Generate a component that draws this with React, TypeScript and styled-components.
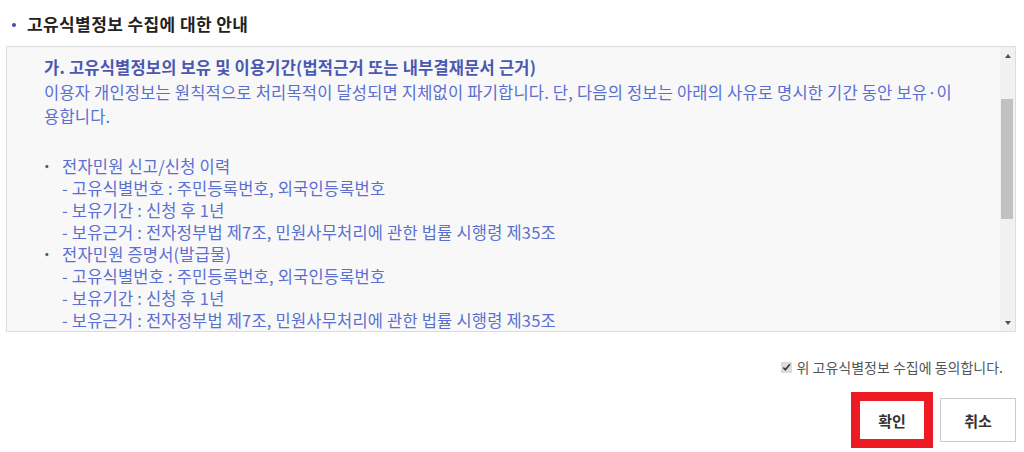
import React from 'react';
import styled, { createGlobalStyle, css } from 'styled-components';

const GlobalStyle = createGlobalStyle`
  html, body {
    margin: 0;
    padding: 0;
    background: #ffffff;
  }

  body {
    font-family: 'Noto Sans CJK KR', 'Noto Sans', sans-serif;
    color: #333333;
  }
`;

const Page = styled.div`
  padding: 10px 8px 0 6px;
`;

const SectionTitle = styled.h3`
  display: flex;
  align-items: center;
  margin: 0;
  padding-left: 6px;
  height: 26px;
  font-size: 17px;
  font-weight: 700;
  letter-spacing: 0.4px;
  color: #222222;

  &::before {
    content: '';
    width: 4px;
    height: 4px;
    margin: 3px 11px 0 0;
    border-radius: 50%;
    background: #3f51b5;
  }
`;

const ScrollBox = styled.div`
  box-sizing: border-box;
  display: flex;
  height: 286px;
  margin-top: 10px;
  border: 1px solid #dddddd;
  background: #f8f8f8;
`;

const Content = styled.div`
  flex: 1;
  overflow: hidden;
  padding: 9px 20px 0 37px;
  font-size: 16.5px;
  line-height: 22px;
  letter-spacing: 0.2px;
  color: #5b6fd0;
`;

const ScrollBar = styled.div`
  display: flex;
  flex-direction: column;
  width: 15px;
  background: #f1f1f1;
`;

const ArrowButton = styled.div<{ $down?: boolean }>`
  display: flex;
  align-items: center;
  justify-content: center;
  height: 17px;

  &::after {
    content: '';
    border-left: 3.5px solid transparent;
    border-right: 3.5px solid transparent;
    ${(p) =>
      p.$down
        ? css`
            border-top: 4px solid #505050;
          `
        : css`
            border-bottom: 4px solid #505050;
          `}
  }
`;

const Track = styled.div`
  flex: 1;
  padding: 0 2px 0 1px;
`;

const Thumb = styled.div<{ $offset: number; $size: number }>`
  margin-top: ${(p) => p.$offset}px;
  height: ${(p) => p.$size}px;
  background: #c1c1c1;
`;

const Heading = styled.p`
  margin: 0;
  font-weight: 700;
  color: #4a58b0;
`;

const Paragraph = styled.p`
  margin: 2px 0 27px;
  white-space: nowrap;
  line-height: 24px;
`;

const ItemList = styled.ul`
  list-style: none;
  margin: 0;
  padding: 0;
`;

const Item = styled.li`
  position: relative;
  padding-left: 18px;

  &::before {
    content: '·';
    position: absolute;
    left: -2px;
    top: 0;
    color: #555555;
    font-weight: 700;
  }
`;

const SubLine = styled.div`
  white-space: nowrap;
`;

const AgreeRow = styled.label`
  display: flex;
  justify-content: flex-end;
  align-items: center;
  gap: 5px;
  height: 20px;
  margin-top: 25px;
  padding-right: 13px;
  font-size: 14px;
  color: #555555;
`;

const CheckBox = styled.input`
  width: 11px;
  height: 11px;
  margin: 0;
  accent-color: #dcdcdc;
`;

const ButtonRow = styled.div`
  display: flex;
  justify-content: flex-end;
  align-items: center;
  gap: 7px;
  margin-top: 15px;
`;

const Button = styled.button<{ $highlighted?: boolean }>`
  box-sizing: border-box;
  width: 76px;
  height: 44px;
  padding: 0;
  border: 1px solid #cccccc;
  background: #ffffff;
  font-family: inherit;
  font-size: 15px;
  font-weight: 700;
  color: #333333;
  cursor: pointer;

  ${(p) =>
    p.$highlighted &&
    css`
      width: 82px;
      height: 56px;
      border: 9px solid #ed1c24;
    `}
`;

interface RetentionItem {
  title: string;
  lines: string[];
}

const items: RetentionItem[] = [
  {
    title: '전자민원 신고/신청 이력',
    lines: [
      '- 고유식별번호 : 주민등록번호, 외국인등록번호',
      '- 보유기간 : 신청 후 1년',
      '- 보유근거 : 전자정부법 제7조, 민원사무처리에 관한 법률 시행령 제35조',
    ],
  },
  {
    title: '전자민원 증명서(발급물)',
    lines: [
      '- 고유식별번호 : 주민등록번호, 외국인등록번호',
      '- 보유기간 : 신청 후 1년',
      '- 보유근거 : 전자정부법 제7조, 민원사무처리에 관한 법률 시행령 제35조',
    ],
  },
];

export default function App() {
  return (
    <Page>
      <GlobalStyle />
      <SectionTitle>고유식별정보 수집에 대한 안내</SectionTitle>
      <ScrollBox>
        <Content>
          <Heading>가. 고유식별정보의 보유 및 이용기간(법적근거 또는 내부결재문서 근거)</Heading>
          <Paragraph>
            이용자 개인정보는 원칙적으로 처리목적이 달성되면 지체없이 파기합니다. 단, 다음의 정보는 아래의 사유로 명시한 기간 동안 보유·이
            <br />
            용합니다.
          </Paragraph>
          <ItemList>
            {items.map((item) => (
              <Item key={item.title}>
                {item.title}
                {item.lines.map((line) => (
                  <SubLine key={line}>{line}</SubLine>
                ))}
              </Item>
            ))}
          </ItemList>
        </Content>
        <ScrollBar>
          <ArrowButton />
          <Track>
            <Thumb $offset={35} $size={120} />
          </Track>
          <ArrowButton $down />
        </ScrollBar>
      </ScrollBox>
      <AgreeRow>
        <CheckBox type="checkbox" defaultChecked />
        위 고유식별정보 수집에 동의합니다.
      </AgreeRow>
      <ButtonRow>
        <Button type="button" $highlighted>
          확인
        </Button>
        <Button type="button">취소</Button>
      </ButtonRow>
    </Page>
  );
}
